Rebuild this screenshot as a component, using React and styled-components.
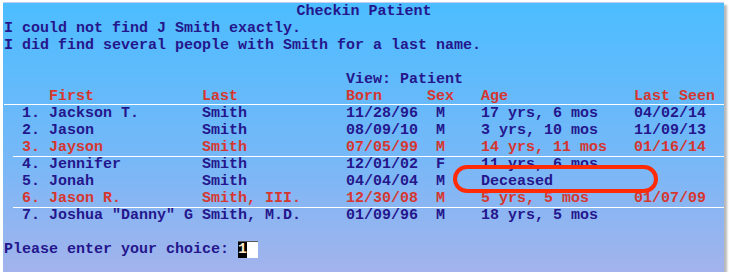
import React from 'react'
import styled, { createGlobalStyle } from 'styled-components'

const GlobalStyle = createGlobalStyle`
  html, body {
    margin: 0;
    background: #fff;
  }
`

const Window = styled.div`
  position: relative;
  margin: 2px 0 0 3px;
  width: 721px;
  height: 270px;
  box-sizing: border-box;
  padding-left: 1px;
  border-top: 1px solid rgba(255, 255, 255, 0.35);
  background: linear-gradient(180deg, #4cbdff 0%, #74b8f8 55%, #a3b3ec 100%);
  box-shadow: 3px 3px 2px rgba(0, 0, 0, 0.28);
  font-family: 'Liberation Mono', 'Courier New', monospace;
  font-weight: bold;
  font-size: 15px;
  line-height: 17px;
  color: #24168c;
  white-space: pre;
`

const Line = styled.div`
  height: 17px;
  text-align: ${(p) => (p.center ? 'center' : 'left')};
  width: 80ch;
`

const Row = styled.div`
  display: grid;
  grid-template-columns: 5ch 17ch 16ch 9ch 6ch 17ch 10ch;
  height: 17px;
  color: ${(p) => (p.red ? '#d6362f' : 'inherit')};
  background: ${(p) =>
    p.divider
      ? 'linear-gradient(#ffffff, #ffffff) no-repeat 9px 0 / calc(100% - 9px) 1px'
      : 'none'};
`

const Cell = styled.span`
  padding-left: ${(p) => p.indent || 0}ch;
`

const HeaderRow = styled(Row)`
  color: #d6362f;
  border-bottom: 1px solid #ffffff;
  height: 16px;
`

const Prompt = styled.div`
  display: flex;
  height: 17px;
  margin-top: 17px;
`

const InputBox = styled.div`
  display: flex;
  width: 20px;
  height: 17px;
  box-sizing: border-box;
  border-top: 1px solid #5a5a5a;
  background: #fff;
`

const Caret = styled.span`
  width: 9px;
  background: #000;
  color: #ffe9c8;
  line-height: 16px;
`

const Highlight = styled.div`
  position: absolute;
  left: 450px;
  top: 162px;
  width: 205px;
  height: 28px;
  box-sizing: border-box;
  border: 4px solid #ff2a06;
  border-radius: 15px;
`

const patients = [
  ['1.', 'Jackson T.', 'Smith', '11/28/96', 'M', '17 yrs, 6 mos', '04/02/14'],
  ['2.', 'Jason', 'Smith', '08/09/10', 'M', '3 yrs, 10 mos', '11/09/13'],
  ['3.', 'Jayson', 'Smith', '07/05/99', 'M', '14 yrs, 11 mos', '01/16/14', 'red'],
  ['4.', 'Jennifer', 'Smith', '12/01/02', 'F', '11 yrs, 6 mos', '', 'divider'],
  ['5.', 'Jonah', 'Smith', '04/04/04', 'M', 'Deceased', ''],
  ['6.', 'Jason R.', 'Smith, III.', '12/30/08', 'M', '5 yrs, 5 mos', '01/07/09', 'red'],
  ['7.', 'Joshua "Danny" G', 'Smith, M.D.', '01/09/96', 'M', '18 yrs, 5 mos', '', 'divider'],
]

const App = () => {
  return (
    <>
      <GlobalStyle />
      <Window>
        <Line center>Checkin Patient</Line>
        <Line>I could not find J Smith exactly.</Line>
        <Line>I did find several people with Smith for a last name.</Line>
        <Line />
        <Line>{'                                      View: Patient'}</Line>
        <HeaderRow>
          <Cell />
          <Cell>First</Cell>
          <Cell>Last</Cell>
          <Cell>Born</Cell>
          <Cell>Sex</Cell>
          <Cell>Age</Cell>
          <Cell>Last Seen</Cell>
        </HeaderRow>
        {patients.map(([num, first, last, born, sex, age, seen, flag]) => (
          <Row key={num} red={flag === 'red'} divider={flag === 'divider'}>
            <Cell indent={2}>{num}</Cell>
            <Cell>{first}</Cell>
            <Cell>{last}</Cell>
            <Cell>{born}</Cell>
            <Cell indent={1}>{sex}</Cell>
            <Cell>{age}</Cell>
            <Cell>{seen}</Cell>
          </Row>
        ))}
        <Prompt>
          <span>{'Please enter your choice: '}</span>
          <InputBox>
            <Caret>1</Caret>
          </InputBox>
        </Prompt>
        <Highlight />
      </Window>
    </>
  )
}

export default App
